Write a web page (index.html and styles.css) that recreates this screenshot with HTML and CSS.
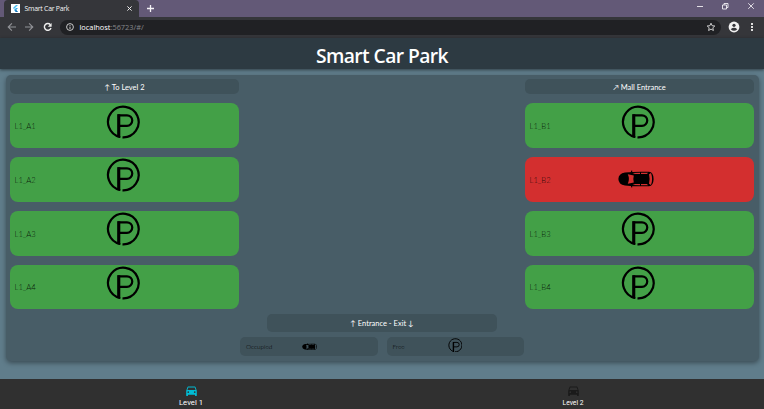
FILE: index.html
```html
<!DOCTYPE html>
<html lang="en">
<head>
<meta charset="utf-8">
<title>Smart Car Park</title>
<link rel="stylesheet" href="styles.css">
</head>
<body>
<svg class="defs" width="0" height="0">
  <symbol id="parking" viewBox="0 0 34 34">
    <path d="M14.200 32A15.300 15.300 0 1 1 16.500 32.300M12.500 31V10.300H21A5.250 5.250 0 0 1 21 20.800H12.500" fill="none" stroke="#000" stroke-width="2.200"/>
    <path d="M11.400 9.200H14.300V33L11.400 32.200Z"/>
  </symbol>
  <symbol id="topcar" viewBox="0 0 36 18">
    <path d="M7 2.500Q18 1.300 31 1.800Q35.400 2 35.600 9Q35.400 16 31 16.200Q18 16.700 7 15.500Q.5 14.500.4 9Q.5 3.500 7 2.500Z"/>
    <path fill="currentColor" d="M9.800 4.200L15.800 5.400Q14.800 9 15.800 12.600L9.800 13.800Q12 9 9.800 4.200ZM31 4.200L33 3Q35.200 9 33 15L31 13.800Q32.200 9 31 4.200ZM14.500 3L22 2.800V4H17ZM23 2.800H30L29 4H23ZM14.500 15L22 15.200V14H17ZM23 15.200H30L29 14H23Z"/>
    <path d="M12.500 3L13.400 .4H14.200V3ZM12.500 15L13.400 17.600H14.200V15Z"/>
  </symbol>
  <symbol id="frontcar" viewBox="3 4 18 17">
    <path d="M18.920 6.010C18.720 5.420 18.160 5 17.500 5h-11c-.66 0-1.210.42-1.420 1.010L3 12v8c0 .55.45 1 1 1h1c.55 0 1-.45 1-1v-1h12v1c0 .55.45 1 1 1h1c.55 0 1-.45 1-1v-8l-2.080-5.990zM6.500 16c-.83 0-1.500-.67-1.500-1.500S5.670 13 6.500 13s1.500.67 1.500 1.500S7.330 16 6.500 16zm11 0c-.83 0-1.500-.67-1.500-1.500s.67-1.500 1.500-1.500 1.500.67 1.500 1.500-.67 1.500-1.500 1.500zM5 11l1.500-4.500h11L19 11H5z"/>
  </symbol>
</svg>

<div class="tabstrip">
  <div class="tab">
    <svg class="favicon" viewBox="0 0 9 9"><path fill="#fff" d="M0 0h9v9H0z"/><path fill="#45bdf1" d="M5 1h2L3 5 2 4z"/><path fill="#31a9e8" d="M5 4h2L5.200 5.900 7 8H5L3 5.900z"/><path fill="#176db0" d="M4 7l1-1 2 2H5z"/></svg>
    <span class="tab-title">Smart Car Park</span>
    <svg class="tab-close" viewBox="0 0 5 5"><path d="M.4.4l4.200 4.200M4.600.4L.4 4.600"/></svg>
  </div>
  <svg class="new-tab" viewBox="0 0 7 7"><path d="M3.500 0v7M0 3.500h7"/></svg>
  <svg class="window-controls" viewBox="0 0 60 10"><path d="M0 5.500h6M25.500 4h4v4h-4zM27 4V2.500h4v4h-1.500M51.300 2.300l5.500 5.500M56.800 2.300l-5.500 5.500"/></svg>
</div>

<div class="toolbar">
  <svg class="nav" viewBox="0 0 50 10">
    <path class="dim" d="M9 5H1.200M4.900 1.300L1.200 5l3.700 3.700M18 5h7.800M22.100 1.300L25.800 5l-3.700 3.700"/>
    <path class="bright" d="M43.400 2.700A3.400 3.400 0 1 0 44 6"/><path class="fill" d="M44.600 1v3.800h-3.800z"/>
  </svg>
  <div class="address">
    <svg class="info" viewBox="0 0 8 8"><circle cx="4" cy="4" r="3.400"/><path d="M4 3.600v2.400M4 2v.9"/></svg>
    <span class="url"><b>localhost</b>:56723/#/</span>
    <svg class="star" viewBox="0 0 10 10"><path d="M5 1.200l1.100 2.500 2.700.3-2 1.800.6 2.700L5 7.100 2.600 8.500l.6-2.700-2-1.800 2.700-.3z"/></svg>
  </div>
  <svg class="profile" viewBox="0 0 12 12"><circle cx="6" cy="6" r="5.400" fill="#f1f1f1"/><circle cx="6" cy="4.300" r="1.600" fill="#35363a"/><path fill="#35363a" d="M2.700 8.200Q6 5.500 9.300 8.200Q6 11.500 2.700 8.200"/></svg>
  <svg class="more" viewBox="0 0 2 8"><path d="M0 0h2v2H0zM0 3h2v2H0zM0 6h2v2H0z"/></svg>
</div>

<header class="appbar"><h1>Smart Car Park</h1></header>

<main class="stage">
  <section class="panel">
    <div class="column">
      <div class="sign">↑ To Level 2</div>
      <div class="slot"><span>L1_A1</span><svg class="p"><use href="#parking"/></svg></div>
      <div class="slot"><span>L1_A2</span><svg class="p"><use href="#parking"/></svg></div>
      <div class="slot"><span>L1_A3</span><svg class="p"><use href="#parking"/></svg></div>
      <div class="slot"><span>L1_A4</span><svg class="p"><use href="#parking"/></svg></div>
    </div>
    <div class="middle">
      <div class="sign gate">↑ Entrance - Exit ↓</div>
      <div class="legend">
        <div class="key"><span>Occupied</span><svg class="mini-car"><use href="#topcar"/></svg></div>
        <div class="key"><span>Free</span><svg class="mini-p"><use href="#parking"/></svg></div>
      </div>
    </div>
    <div class="column">
      <div class="sign">↗ Mall Entrance</div>
      <div class="slot"><span>L1_B1</span><svg class="p"><use href="#parking"/></svg></div>
      <div class="slot taken"><span>L1_B2</span><svg class="car"><use href="#topcar"/></svg></div>
      <div class="slot"><span>L1_B3</span><svg class="p"><use href="#parking"/></svg></div>
      <div class="slot"><span>L1_B4</span><svg class="p"><use href="#parking"/></svg></div>
    </div>
  </section>
</main>

<nav class="bottom">
  <a class="active"><svg><use href="#frontcar"/></svg><span>Level 1</span></a>
  <a><svg><use href="#frontcar"/></svg><span>Level 2</span></a>
</nav>
</body>
</html>
```

FILE: styles.css
```css
* { box-sizing: border-box; }
body {
  margin: 0;
  width: 764px;
  height: 409px;
  overflow: hidden;
  display: flex;
  flex-direction: column;
  background: #607d8b;
  font-family: Lato, sans-serif;
}
svg { display: block; flex: none; }
.defs { position: absolute; }

.tabstrip {
  height: 17px;
  flex: none;
  display: flex;
  align-items: center;
  padding-left: 4px;
  background: #635977;
}
.tab {
  width: 135px;
  height: 17px;
  display: flex;
  align-items: center;
  padding: 0 7px 1px 7px;
  background: #35363a;
  border-radius: 4px 4px 0 0;
}
.favicon { width: 9px; height: 9px; }
.tab-title {
  flex: 1;
  margin-left: 4.500px;
  color: #f4f4f4;
  font: 6.900px "Open Sans", sans-serif;
  letter-spacing: -.25px;
}
.tab-close { width: 5px; height: 5px; stroke: #eee; stroke-width: 1; }
.new-tab { width: 7px; height: 7px; margin-left: 8px; margin-top: -1px; stroke: #f4f2f6; stroke-width: 1.300; }
.window-controls {
  width: 60px;
  height: 10px;
  margin: -5px 7px 0 auto;
  fill: none;
  stroke: #f0eef3;
  stroke-width: .9;
}

.toolbar {
  height: 21px;
  flex: none;
  display: flex;
  align-items: center;
  padding: 0 10px 1px 7px;
  background: #35363a;
}
.nav { width: 50px; height: 10px; fill: none; }
.dim { stroke: #929397; stroke-width: 1.100; }
.bright { stroke: #eee; stroke-width: 1.400; }
.fill { fill: #eee; }
.address {
  width: 661px;
  height: 15px;
  margin-left: 3px;
  padding: 0 5px 0 6px;
  display: flex;
  align-items: center;
  background: #202124;
  border-radius: 8px;
}
.info { width: 8px; height: 8px; fill: none; stroke: #ddd; stroke-width: .9; }
.url {
  flex: 1;
  margin-left: 5.500px;
  color: #85878b;
  font: 7.400px "Open Sans", sans-serif;
}
.url b { color: #fff; font-weight: 500; }
.star { width: 10px; height: 10px; fill: none; stroke: #ddd; stroke-width: .9; }
.profile { width: 12px; height: 12px; margin-left: 7px; }
.more { width: 2px; height: 8px; margin-left: auto; margin-right: 1px; fill: #ddd; }

.appbar {
  position: relative;
  height: 31px;
  flex: none;
  background: #2d3a42;
  box-shadow: 0 1px 3px rgba(0, 0, 0, .5);
}
h1 {
  margin: 0;
  padding-top: 2px;
  color: #fff;
  text-align: center;
  font: 600 19.300px/31px "Open Sans", sans-serif;
  letter-spacing: -.58px;
}

.stage { height: 310px; flex: none; padding: 6px 5px 18px 6px; }
.panel {
  height: 286px;
  display: flex;
  justify-content: space-between;
  padding: 4px 5px 5.500px 4px;
  background: #485d67;
  border-radius: 5px;
  box-shadow: 0 2px 5px rgba(0, 0, 0, .4);
}
.column { width: 229px; display: flex; flex-direction: column; gap: 9px; }
.sign {
  height: 15.300px;
  flex: none;
  color: #fff;
  background: #3f525a;
  border-radius: 5px;
  text-align: center;
  font-size: 7.500px;
  line-height: 17px;
}
.slot {
  position: relative;
  height: 44.800px;
  flex: none;
  display: flex;
  align-items: center;
  justify-content: center;
  background: #43a047;
  border-radius: 8px;
}
.taken { background: #d32f2f; }
.slot span {
  position: absolute;
  top: 17.800px;
  left: 4.500px;
  color: rgba(0, 0, 0, .85);
  font-size: 7.700px;
  line-height: 10px;
  font-weight: 300;
}
.p { width: 34px; height: 34px; margin: -8px 2.500px 0 0; }
.car { width: 36px; height: 18px; margin-right: 7px; color: #d32f2f; }

.middle {
  width: 284px;
  display: flex;
  flex-direction: column;
  align-items: center;
  justify-content: flex-end;
  gap: 5px;
}
.gate { width: 229.500px; height: 18px; line-height: 19px; }
.legend { display: flex; gap: 9px; }
.key {
  position: relative;
  width: 137.500px;
  height: 18.500px;
  display: flex;
  align-items: center;
  justify-content: center;
  background: #3f525a;
  border-radius: 5px;
}
.key span {
  position: absolute;
  left: 6px;
  color: #000;
  font-size: 6.400px;
  font-weight: 300;
}
.mini-car { width: 15px; height: 7.500px; margin-left: 2px; color: #3f525a; }
.mini-p { width: 14.500px; height: 14.500px; margin: -3px 1px 0 0; }

.bottom { height: 30px; flex: none; display: flex; background: #303030; }
.bottom a {
  flex: 1;
  display: flex;
  flex-direction: column;
  align-items: center;
  padding-top: 7px;
  color: #fff;
  font: 6.700px/9px Roboto, sans-serif;
}
.bottom svg { width: 11px; height: 10px; fill: #1a1a1a; }
.bottom span { margin-top: 2.500px; }
.bottom .active { font-size: 7.700px; }
.bottom .active svg { fill: #00bcd4; }
.bottom .active span { margin-top: 2px; }
```
